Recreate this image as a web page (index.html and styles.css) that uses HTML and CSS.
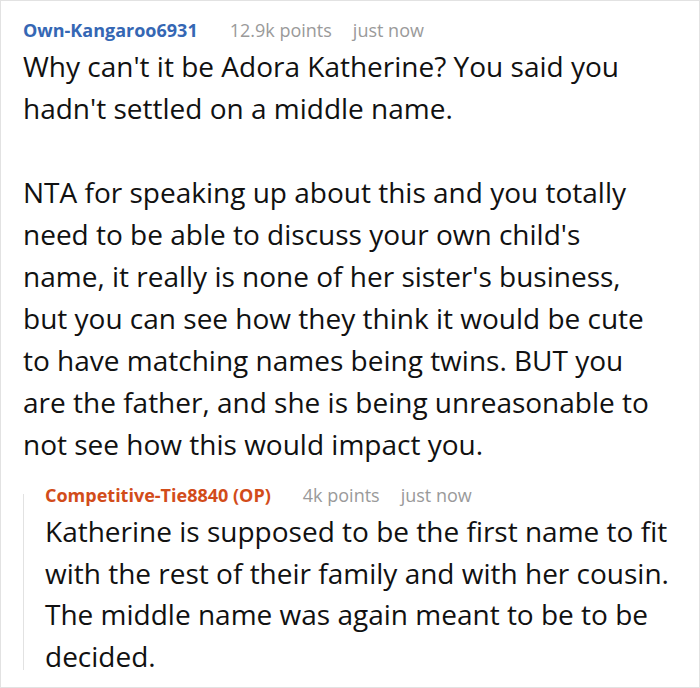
FILE: index.html
```html
<!DOCTYPE html>
<html>
<head>
<meta charset="utf-8">
<link rel="stylesheet" href="styles.css">
</head>
<body>
<div class="frame">
  <div class="comment">
    <div class="meta">
      <span class="user">Own-Kangaroo6931</span>
      <span class="info">12.9k points</span>
      <span class="info">just now</span>
    </div>
    <div class="body">
      <p>Why can't it be Adora Katherine? You said you<br>hadn't settled on a middle name.</p>
      <p>NTA for speaking up about this and you totally<br>need to be able to discuss your own child's<br>name, it really is none of her sister's business,<br>but you can see how they think it would be cute<br>to have matching names being twins. BUT you<br>are the father, and she is being unreasonable to<br>not see how this would impact you.</p>
    </div>
    <div class="reply">
      <div class="meta">
        <span class="user op">Competitive-Tie8840 (OP)</span>
        <span class="info">4k points</span>
        <span class="info">just now</span>
      </div>
      <div class="reply-body">
        <p>Katherine is supposed to be the first name to fit<br>with the rest of their family and with her cousin.<br>The middle name was again meant to be to be<br>decided.</p>
      </div>
    </div>
  </div>
</div>
</body>
</html>
```

FILE: styles.css
```css
html, body {
  margin: 0;
  padding: 0;
  background: #fff;
}
.frame {
  box-sizing: border-box;
  width: 700px;
  height: 688px;
  border: 1px solid #e2e2e2;
  overflow: hidden;
  font-family: "Open Sans", "Noto Sans", sans-serif;
  color: #111;
}
.comment {
  padding: 17px 0 0 22px;
}
.meta {
  display: flex;
  gap: 21px;
  align-items: baseline;
  font-size: 18px;
  line-height: 24px;
  white-space: nowrap;
}
.user {
  font-weight: 700;
  color: #3567b4;
  margin-right: 11px;
}
.user.op {
  color: #d24c1a;
}
.info {
  color: #9a9a9a;
}
.body {
  margin-top: 3px;
  font-size: 28px;
  line-height: 42px;
  white-space: nowrap;
}
.body p {
  margin: 0 0 42px 0;
}
.body p:last-child {
  margin-bottom: 0;
}
.reply {
  position: relative;
  margin-top: 18px;
  padding-left: 22px;
}
.reply::before {
  content: "";
  position: absolute;
  left: 0;
  top: 11px;
  bottom: 7px;
  width: 1px;
  background: #e2e2e2;
}
.reply-body {
  margin-top: 4px;
  font-size: 28px;
  line-height: 41.5px;
  white-space: nowrap;
}
.reply-body p {
  margin: 0;
}
```
